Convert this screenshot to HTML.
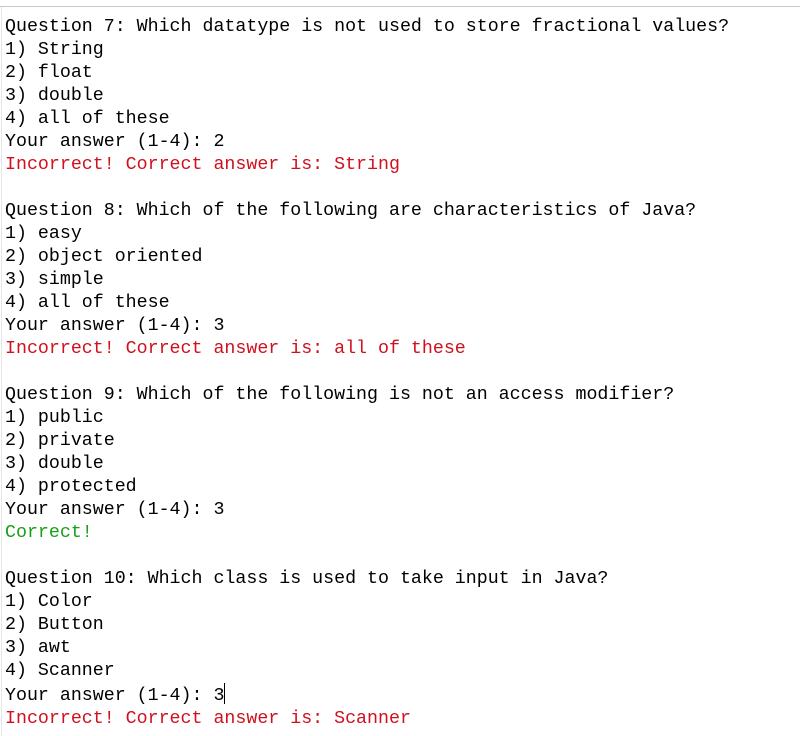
<!DOCTYPE html>
<html><head><style>
html,body{margin:0;padding:0;background:#fff;width:800px;height:736px;overflow:hidden}
.top{position:absolute;left:0;top:6px;width:800px;height:1px;background:#c8c8c8}
.lb{position:absolute;left:1px;top:7px;width:1px;height:729px;background:#e6e6e6}
pre{position:absolute;left:5px;top:16px;margin:0;font-family:"Liberation Mono",monospace;font-size:18.3px;line-height:23px;color:#000}
.r{color:#d0101e}.g{color:#17a017}
.cur{display:inline-block;width:1px;height:21px;background:#000;vertical-align:-4px}
</style></head><body>
<div class="top"></div><div class="lb"></div>
<pre>Question 7: Which datatype is not used to store fractional values?
1) String
2) float
3) double
4) all of these
Your answer (1-4): 2
<span class="r">Incorrect! Correct answer is: String</span>

Question 8: Which of the following are characteristics of Java?
1) easy
2) object oriented
3) simple
4) all of these
Your answer (1-4): 3
<span class="r">Incorrect! Correct answer is: all of these</span>

Question 9: Which of the following is not an access modifier?
1) public
2) private
3) double
4) protected
Your answer (1-4): 3
<span class="g">Correct!</span>

Question 10: Which class is used to take input in Java?
1) Color
2) Button
3) awt
4) Scanner
Your answer (1-4): 3<span class="cur"></span>
<span class="r">Incorrect! Correct answer is: Scanner</span></pre>
</body></html>
